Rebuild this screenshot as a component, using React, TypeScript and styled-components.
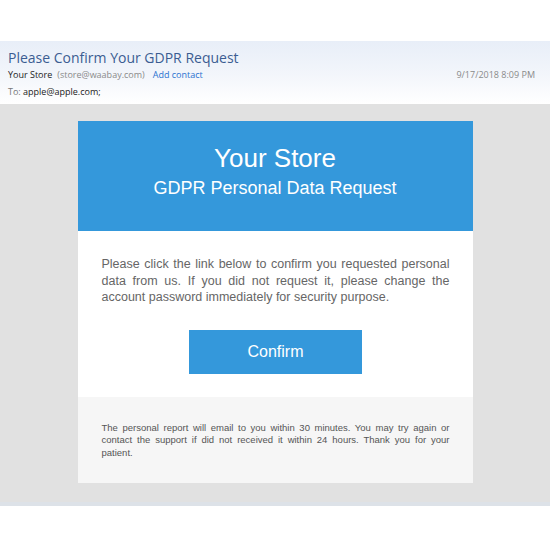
import React from 'react';
import styled, { createGlobalStyle } from 'styled-components';

const GlobalStyle = createGlobalStyle`
  html, body {
    margin: 0;
    padding: 0;
    background: #ffffff;
  }
`;

const Page = styled.div`
  width: 550px;
  height: 550px;
  overflow: hidden;
  padding-top: 41px;
  box-sizing: border-box;
`;

const MailHeader = styled.header`
  height: 63px;
  box-sizing: border-box;
  padding: 8px 15px 0 8px;
  background: linear-gradient(to bottom, #e8eef8 0%, #f3f6fb 55%, #ffffff 100%);
  font-family: "Open Sans", "Noto Sans", sans-serif;
`;

const Subject = styled.h1`
  margin: 0;
  font-size: 14px;
  font-weight: 400;
  line-height: 18px;
  color: #3b5d92;
`;

const MetaRow = styled.div`
  display: flex;
  align-items: center;
  gap: 5px;
  font-size: 9px;
  line-height: 14px;
  margin-top: 1px;
`;

const Sender = styled.span`
  color: #222;
`;

const Address = styled.span`
  color: #8a8a8a;
`;

const ContactLink = styled.span`
  color: #2a72d0;
  margin-left: 3px;
`;

const Date = styled.span`
  margin-left: auto;
  color: #8a8a8a;
`;

const ToRow = styled.div`
  font-size: 9px;
  line-height: 14px;
  margin-top: 3px;
  color: #222;
`;

const ToLabel = styled.span`
  color: #777;
`;

const Canvas = styled.main`
  background: #e1e1e1;
  padding: 17px 0 19px;
  border-bottom: 4px solid #dde2e8;
`;

const Card = styled.section`
  width: 395px;
  margin: 0 auto;
  font-family: "Liberation Sans", Arial, sans-serif;
`;

const Banner = styled.div`
  background: #3498db;
  color: #fff;
  text-align: center;
  padding: 22px 0 32px;
`;

const StoreName = styled.h2`
  margin: 0;
  font-size: 26px;
  font-weight: 400;
  line-height: 30px;
`;

const BannerSub = styled.p`
  margin: 4px 0 0;
  font-size: 18px;
  line-height: 22px;
`;

const Body = styled.div`
  background: #fff;
  padding: 25px 23px 23px 24px;
`;

const Message = styled.p`
  margin: 0;
  font-size: 12.5px;
  line-height: 16.5px;
  color: #666;
  text-align: justify;
`;

const ButtonRow = styled.div`
  display: flex;
  justify-content: center;
  margin-top: 24px;
`;

const ConfirmButton = styled.a`
  display: flex;
  align-items: center;
  justify-content: center;
  width: 173px;
  height: 44px;
  background: #3498db;
  color: #fff;
  font-size: 16px;
  text-decoration: none;
`;

const Footer = styled.div`
  background: #f6f6f6;
  padding: 25px 23px 24px 24px;
`;

const FooterText = styled.p`
  margin: 0;
  font-size: 9.5px;
  line-height: 12.5px;
  color: #555;
  text-align: justify;
`;

const App: React.FC = () => {
  return (
    <>
      <GlobalStyle />
      <Page>
        <MailHeader>
          <Subject>Please Confirm Your GDPR Request</Subject>
          <MetaRow>
            <Sender>Your Store</Sender>
            <Address>(store@waabay.com)</Address>
            <ContactLink>Add contact</ContactLink>
            <Date>9/17/2018 8:09 PM</Date>
          </MetaRow>
          <ToRow>
            <ToLabel>To:</ToLabel> apple@apple.com;
          </ToRow>
        </MailHeader>
        <Canvas>
          <Card>
            <Banner>
              <StoreName>Your Store</StoreName>
              <BannerSub>GDPR Personal Data Request</BannerSub>
            </Banner>
            <Body>
              <Message>
                Please click the link below to confirm you requested personal data from us. If you did not request it, please change the account password immediately for security purpose.
              </Message>
              <ButtonRow>
                <ConfirmButton href="#">Confirm</ConfirmButton>
              </ButtonRow>
            </Body>
            <Footer>
              <FooterText>
                The personal report will email to you within 30 minutes. You may try again or contact the support if did not received it within 24 hours. Thank you for your patient.
              </FooterText>
            </Footer>
          </Card>
        </Canvas>
      </Page>
    </>
  );
};

export default App;
